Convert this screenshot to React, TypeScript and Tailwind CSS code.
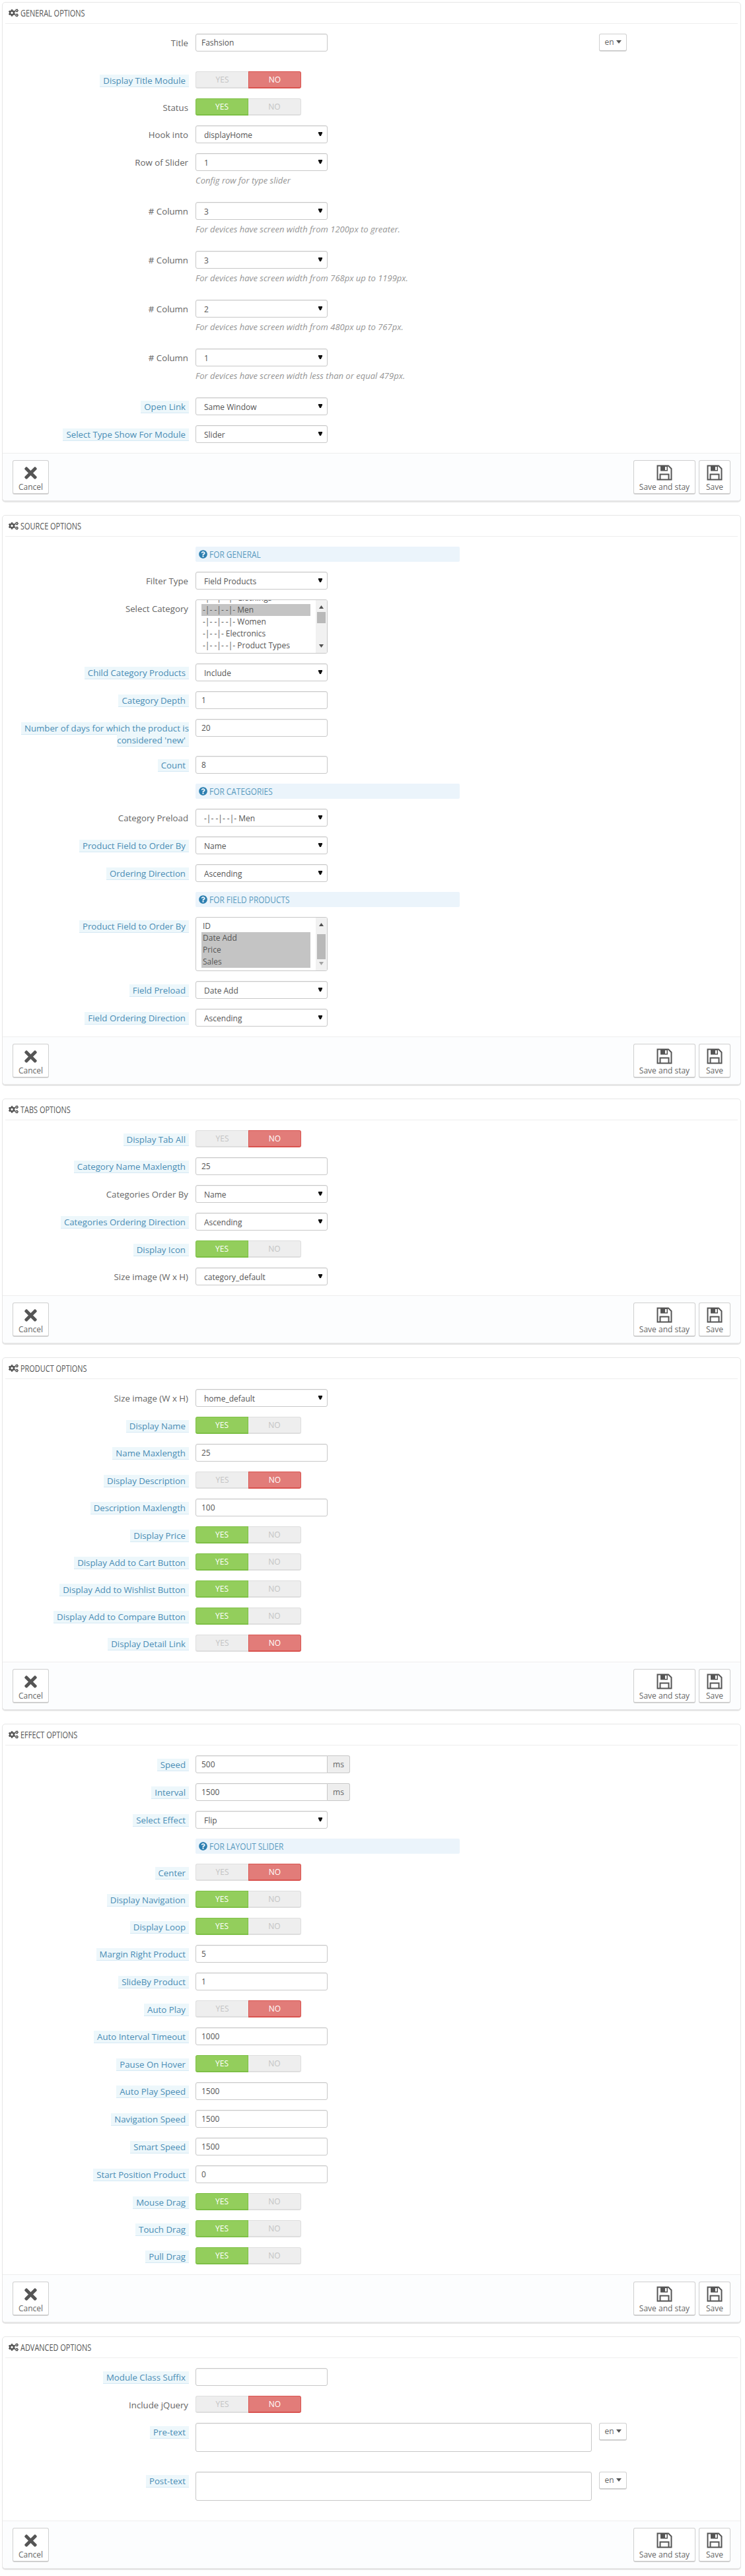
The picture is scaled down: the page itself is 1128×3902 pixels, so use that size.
import { ReactNode } from "react";
import { FaCogs, FaQuestionCircle, FaTimes } from "react-icons/fa";

function Arrow() {
  return (
    <svg className="absolute right-[8px] top-[10px]" width="6" height="6" viewBox="0 0 7 7">
      <polygon points="0,0 7,0 7,2 4.5,7 2.5,7 0,2" fill="#111" />
    </svg>
  );
}

function Field({
  label,
  tip,
  extra,
  children,
}: {
  label: string;
  tip?: boolean;
  extra?: boolean;
  children: ReactNode;
}) {
  return (
    <div className={extra ? "flex mb-[30px]" : "flex mb-[15px]"}>
      <div className="w-[282px] mr-[10px] pl-[20px] pt-[5px] text-right text-[13.25px] leading-[18px]">
        {tip ? (
          <span className="bg-[#edf7fb] border-b border-[#d5e9f4] px-[5px] text-[#4a8db5]">{label}</span>
        ) : (
          <span className="pr-px text-[#666]">{label}</span>
        )}
      </div>
      <div>{children}</div>
    </div>
  );
}

function TextInput({ value = "", className = "w-[200px] rounded-[3px]" }: { value?: string; className?: string }) {
  return (
    <input
      defaultValue={value}
      className={`block h-[27px] ${className} bg-white border border-[#c8c8c8] pl-[8px] text-[#555] shadow-[inset_0_1px_1px_rgba(0,0,0,0.06)] outline-none`}
    />
  );
}

function Select({ value }: { value: string }) {
  return (
    <div className="relative w-[200px] h-[27px]">
      <select
        defaultValue={value}
        className="block appearance-none w-full h-full bg-white border border-[#c8c8c8] rounded-[3px] pl-[12px] pt-[2px] text-[#555] shadow-[inset_0_1px_1px_rgba(0,0,0,0.06)] outline-none"
      >
        <option>{value}</option>
      </select>
      <Arrow />
    </div>
  );
}

function Toggle({ on }: { on: boolean }) {
  return (
    <div className="flex w-[160px] h-[26px] text-center leading-[23px]">
      {on ? (
        <span className="w-[80px] bg-[#93ce5c] border border-b-2 border-[#7dbf45] rounded-l-[3px] text-white">YES</span>
      ) : (
        <span className="w-[80px] bg-[#eeeeee] border border-b-2 border-r-0 border-[#dedede] rounded-l-[3px] text-[#c4c4c4]">YES</span>
      )}
      {on ? (
        <span className="w-[80px] bg-[#eeeeee] border border-b-2 border-l-0 border-[#dedede] rounded-r-[3px] text-[#c4c4c4]">NO</span>
      ) : (
        <span className="w-[80px] bg-[#e27c79] border border-b-2 border-[#d9534f] rounded-r-[3px] text-white">NO</span>
      )}
    </div>
  );
}

function Heading({ text }: { text: string }) {
  return (
    <div className="flex mb-[15px]">
      <div className="ml-[292px] flex items-center w-[400px] h-[23px] rounded-[2px] bg-[#ebf4fb] pl-[5px] text-[#5a9bbf]">
        <FaQuestionCircle size={13} className="mr-[3px] text-[#2d7fb0]" />
        <span className="inline-block origin-left scale-x-[0.85] text-[14px]">{text}</span>
      </div>
    </div>
  );
}

function ScrollBar({ thumb, thumbH, downDim }: { thumb: string; thumbH: string; downDim?: boolean }) {
  return (
    <div className="absolute right-0 top-0 bottom-0 w-[17px] bg-[#f1f1f1]">
      <svg className="absolute left-[5px] top-[8px]" width="7" height="5" viewBox="0 0 7 5">
        <polygon points="3.5,0 7,5 0,5" fill="#505050" />
      </svg>
      <div className={`absolute left-[2px] w-[13px] bg-[#b9b9b9] ${thumb} ${thumbH}`} />
      <svg className="absolute left-[5px] bottom-[8px]" width="7" height="5" viewBox="0 0 7 5">
        <polygon points="0,0 7,0 3.5,5" fill={downDim ? "#a3a3a3" : "#505050"} />
      </svg>
    </div>
  );
}

function CategoryList() {
  return (
    <div className="relative w-[200px] h-[82px] overflow-hidden bg-white border border-[#c8c8c8] rounded-[3px] leading-[18px] text-[#555]">
      <div className="absolute left-[8px] top-[-12px] w-[165px] [&>div]:pl-[2px]">
        <div>-|- -|- -|- Clothings</div>
        <div className="bg-[#c4c4c4]">-|- -|- -|- Men</div>
        <div>-|- -|- -|- Women</div>
        <div>-|- -|- Electronics</div>
        <div>-|- -|- -|- Product Types</div>
      </div>
      <ScrollBar thumb="top-[18px]" thumbH="h-[17px]" />
    </div>
  );
}

function FieldList() {
  return (
    <div className="relative w-[200px] h-[82px] overflow-hidden bg-white border border-[#c8c8c8] rounded-[3px] leading-[18px] text-[#555]">
      <div className="absolute left-[8px] top-[4px] w-[165px] [&>div]:pl-[2px]">
        <div>ID</div>
        <div className="bg-[#c4c4c4]">Date Add</div>
        <div className="bg-[#c4c4c4]">Price</div>
        <div className="bg-[#c4c4c4]">Sales</div>
      </div>
      <ScrollBar thumb="top-[25px]" thumbH="h-[38px]" downDim />
    </div>
  );
}

function SaveIcon() {
  return (
    <svg width="24" height="24" viewBox="0 0 24 24" fill="none">
      <path d="M1.5 1.5h16.5l4.5 4.5v16.5h-21z" stroke="#555" strokeWidth="2" />
      <path d="M6 1.5h11v8H6z" fill="#555" />
      <rect x="13" y="3" width="2.5" height="5" fill="#fff" />
      <path d="M5.5 22.5v-8h13v8" stroke="#555" strokeWidth="2" />
    </svg>
  );
}

function FootButton({ label, width, children }: { label: string; width: string; children: ReactNode }) {
  return (
    <button className={`${width} h-[52px] bg-white border border-b-2 border-[#cfcfcf] rounded-[3px] flex flex-col items-center text-[#666]`}>
      <span className="mt-[5px] h-[26px] flex items-center justify-center">{children}</span>
      <span className="leading-[18px]">{label}</span>
    </button>
  );
}

function Card({ title, children }: { title: string; children: ReactNode }) {
  return (
    <section className="ml-[3px] mb-[21px] w-[1119px] bg-white border border-[#e6e6e6] rounded-[5px] shadow-[0_2px_0_#e6e6e6] overflow-hidden">
      <div className="mx-[4px] h-[32px] border-b border-[#eeeeee] flex items-center pl-[5px] text-[#555]">
        <FaCogs size={15} className="mr-[3px]" />
        <h2 className="inline-block origin-left scale-x-[0.73] text-[15px] uppercase">{title}</h2>
      </div>
      <div className="pt-[15px]">{children}</div>
      <div className="flex items-start border-t border-[#eeeeee] bg-[#fcfdfe] pt-[10px] pb-[9px] px-[15px]">
        <FootButton label="Cancel" width="w-[55px]">
          <FaTimes size={27} className="text-[#555]" />
        </FootButton>
        <div className="ml-auto flex gap-[5px]">
          <FootButton label="Save and stay" width="w-[94px]">
            <SaveIcon />
          </FootButton>
          <FootButton label="Save" width="w-[48px]">
            <SaveIcon />
          </FootButton>
        </div>
      </div>
    </section>
  );
}

function Help({ text }: { text: string }) {
  return <p className="mt-[5px] mb-[9px] text-[13px] leading-[18px] italic text-[#959595]">{text}</p>;
}

function LangButton() {
  return (
    <button className="w-[42px] h-[27px] bg-white border border-b-2 border-[#cfcfcf] rounded-[3px] flex items-center justify-center text-[#666]">
      en
      <svg className="ml-[3px] mb-[2px]" width="8" height="5" viewBox="0 0 8 5">
        <polygon points="0,0 8,0 4,5" fill="#555" />
      </svg>
    </button>
  );
}

function MsInput({ value }: { value: string }) {
  return (
    <div className="flex">
      <TextInput value={value} className="w-[200px] rounded-l-[3px]" />
      <span className="w-[34px] h-[27px] bg-[#eeeeee] border border-l-0 border-[#c8c8c8] rounded-r-[3px] flex items-center justify-center text-[#666]">
        ms
      </span>
    </div>
  );
}

function Editor() {
  return (
    <div className="flex items-start">
      <textarea className="block w-[600px] h-[44px] bg-white border border-[#c8c8c8] rounded-[3px] mr-[11px] shadow-[inset_0_1px_1px_rgba(0,0,0,0.06)] outline-none resize-none" />
      <LangButton />
    </div>
  );
}

export default function App() {
  return (
    <div className="w-[1128px] h-[3902px] bg-white pt-[3px] font-['Open_Sans',sans-serif] text-[12px] antialiased">
      <Card title="General Options">
        <Field label="Title" extra>
          <div className="flex items-start">
            <TextInput value="Fashsion" className="w-[200px] rounded-[3px] mr-[411px]" />
            <LangButton />
          </div>
        </Field>
        <Field label="Display Title Module" tip>
          <Toggle on={false} />
        </Field>
        <Field label="Status">
          <Toggle on />
        </Field>
        <Field label="Hook into">
          <Select value="displayHome" />
        </Field>
        <Field label="Row of Slider">
          <Select value="1" />
          <Help text="Config row for type slider" />
        </Field>
        <Field label="# Column">
          <Select value="3" />
          <Help text="For devices have screen width from 1200px to greater." />
        </Field>
        <Field label="# Column">
          <Select value="3" />
          <Help text="For devices have screen width from 768px up to 1199px." />
        </Field>
        <Field label="# Column">
          <Select value="2" />
          <Help text="For devices have screen width from 480px up to 767px." />
        </Field>
        <Field label="# Column">
          <Select value="1" />
          <Help text="For devices have screen width less than or equal 479px." />
        </Field>
        <Field label="Open Link" tip>
          <Select value="Same Window" />
        </Field>
        <Field label="Select Type Show For Module" tip>
          <Select value="Slider" />
        </Field>
      </Card>

      <Card title="Source Options">
        <Heading text="FOR GENERAL" />
        <Field label="Filter Type">
          <Select value="Field Products" />
        </Field>
        <Field label="Select Category">
          <CategoryList />
        </Field>
        <Field label="Child Category Products" tip>
          <Select value="Include" />
        </Field>
        <Field label="Category Depth" tip>
          <TextInput value="1" />
        </Field>
        <Field label="Number of days for which the product is considered 'new'" tip>
          <div className="h-[41px]">
            <TextInput value="20" />
          </div>
        </Field>
        <Field label="Count" tip>
          <TextInput value="8" />
        </Field>
        <Heading text="FOR CATEGORIES" />
        <Field label="Category Preload">
          <Select value="-|- -|- -|- Men" />
        </Field>
        <Field label="Product Field to Order By" tip>
          <Select value="Name" />
        </Field>
        <Field label="Ordering Direction" tip>
          <Select value="Ascending" />
        </Field>
        <Heading text="FOR FIELD PRODUCTS" />
        <Field label="Product Field to Order By" tip>
          <FieldList />
        </Field>
        <Field label="Field Preload" tip>
          <Select value="Date Add" />
        </Field>
        <Field label="Field Ordering Direction" tip>
          <Select value="Ascending" />
        </Field>
      </Card>

      <Card title="Tabs Options">
        <Field label="Display Tab All" tip>
          <Toggle on={false} />
        </Field>
        <Field label="Category Name Maxlength" tip>
          <TextInput value="25" />
        </Field>
        <Field label="Categories Order By">
          <Select value="Name" />
        </Field>
        <Field label="Categories Ordering Direction" tip>
          <Select value="Ascending" />
        </Field>
        <Field label="Display Icon" tip>
          <Toggle on />
        </Field>
        <Field label="Size image (W x H)">
          <Select value="category_default" />
        </Field>
      </Card>

      <Card title="Product Options">
        <Field label="Size image (W x H)">
          <Select value="home_default" />
        </Field>
        <Field label="Display Name" tip>
          <Toggle on />
        </Field>
        <Field label="Name Maxlength" tip>
          <TextInput value="25" />
        </Field>
        <Field label="Display Description" tip>
          <Toggle on={false} />
        </Field>
        <Field label="Description Maxlength" tip>
          <TextInput value="100" />
        </Field>
        <Field label="Display Price" tip>
          <Toggle on />
        </Field>
        <Field label="Display Add to Cart Button" tip>
          <Toggle on />
        </Field>
        <Field label="Display Add to Wishlist Button" tip>
          <Toggle on />
        </Field>
        <Field label="Display Add to Compare Button" tip>
          <Toggle on />
        </Field>
        <Field label="Display Detail Link" tip>
          <Toggle on={false} />
        </Field>
      </Card>

      <Card title="Effect Options">
        <Field label="Speed" tip>
          <MsInput value="500" />
        </Field>
        <Field label="Interval" tip>
          <MsInput value="1500" />
        </Field>
        <Field label="Select Effect" tip>
          <Select value="Flip" />
        </Field>
        <Heading text="FOR LAYOUT SLIDER" />
        <Field label="Center" tip>
          <Toggle on={false} />
        </Field>
        <Field label="Display Navigation" tip>
          <Toggle on />
        </Field>
        <Field label="Display Loop" tip>
          <Toggle on />
        </Field>
        <Field label="Margin Right Product" tip>
          <TextInput value="5" />
        </Field>
        <Field label="SlideBy Product" tip>
          <TextInput value="1" />
        </Field>
        <Field label="Auto Play" tip>
          <Toggle on={false} />
        </Field>
        <Field label="Auto Interval Timeout" tip>
          <TextInput value="1000" />
        </Field>
        <Field label="Pause On Hover" tip>
          <Toggle on />
        </Field>
        <Field label="Auto Play Speed" tip>
          <TextInput value="1500" />
        </Field>
        <Field label="Navigation Speed" tip>
          <TextInput value="1500" />
        </Field>
        <Field label="Smart Speed" tip>
          <TextInput value="1500" />
        </Field>
        <Field label="Start Position Product" tip>
          <TextInput value="0" />
        </Field>
        <Field label="Mouse Drag" tip>
          <Toggle on />
        </Field>
        <Field label="Touch Drag" tip>
          <Toggle on />
        </Field>
        <Field label="Pull Drag" tip>
          <Toggle on />
        </Field>
      </Card>

      <Card title="Advanced Options">
        <Field label="Module Class Suffix" tip>
          <TextInput />
        </Field>
        <Field label="Include jQuery">
          <Toggle on={false} />
        </Field>
        <Field label="Pre-text" tip extra>
          <Editor />
        </Field>
        <Field label="Post-text" tip extra>
          <Editor />
        </Field>
      </Card>
    </div>
  );
}
